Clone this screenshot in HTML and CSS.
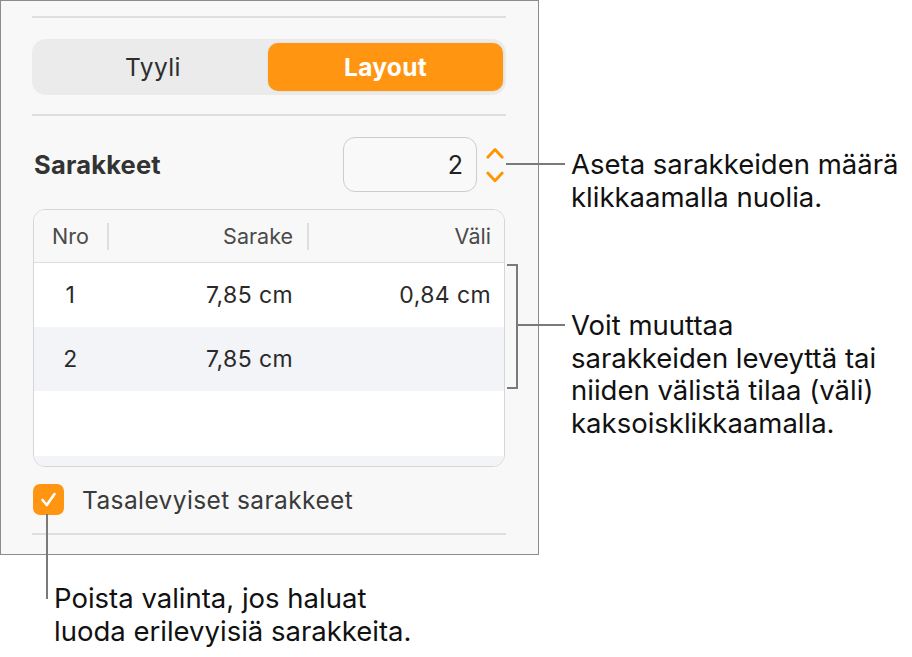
FILE: index.html
```html
<!DOCTYPE html>
<html lang="fi">
<head>
<meta charset="utf-8">
<link rel="stylesheet" href="styles.css">
</head>
<body>
<div class="stage">
  <div class="panel">
    <div class="sep sep-top"></div>
    <div class="segmented">
      <div class="seg">Tyyli</div>
      <div class="seg seg-active">Layout</div>
    </div>
    <div class="sep sep-mid"></div>
    <div class="count-row">
      <div class="count-label">Sarakkeet</div>
      <div class="count-field">2</div>
      <div class="stepper">
        <svg width="18" height="36" viewBox="0 0 18 36">
          <path d="M1.8 10.3 L9 2.5 L16.2 10.3" fill="none" stroke="#ff9500" stroke-width="2.8" stroke-linecap="round" stroke-linejoin="round"/>
          <path d="M1.8 26 L9 33.8 L16.2 26" fill="none" stroke="#ff9500" stroke-width="2.8" stroke-linecap="round" stroke-linejoin="round"/>
        </svg>
      </div>
    </div>
    <div class="table">
      <div class="trow thead">
        <div class="c c-nro">Nro</div>
        <div class="c c-sar">Sarake</div>
        <div class="c c-val">Väli</div>
      </div>
      <div class="trow tbody">
        <div class="c c-nro num">1</div>
        <div class="c c-sar">7,85 cm</div>
        <div class="c c-val">0,84 cm</div>
      </div>
      <div class="trow tbody alt">
        <div class="c c-nro num">2</div>
        <div class="c c-sar">7,85 cm</div>
        <div class="c c-val"></div>
      </div>
      <div class="tfill"></div>
      <div class="tstrip"></div>
    </div>
    <div class="check-row">
      <div class="checkbox">
        <svg width="31" height="31" viewBox="0 0 31 31">
          <path d="M9.5 16 L13.8 21 L21.5 10" fill="none" stroke="#fff" stroke-width="2.6" stroke-linecap="round" stroke-linejoin="round"/>
        </svg>
      </div>
      <div class="check-label">Tasalevyiset sarakkeet</div>
    </div>
    <div class="sep sep-bot"></div>
  </div>

  <div class="lead lead-count"></div>
  <div class="note note-count">Aseta sarakkeiden määrä<br>klikkaamalla nuolia.</div>

  <div class="bracket"></div>
  <div class="lead lead-table"></div>
  <div class="note note-table">Voit muuttaa<br>sarakkeiden leveyttä tai<br>niiden välistä tilaa (väli)<br>kaksoisklikkaamalla.</div>

  <div class="lead-v"></div>
  <div class="note note-check">Poista valinta, jos haluat<br>luoda erilevyisiä sarakkeita.</div>
</div>
</body>
</html>
```

FILE: styles.css
```css
html, body {
  margin: 0;
  padding: 0;
  background: #ffffff;
}

body {
  font-family: "Inter", "Liberation Sans", sans-serif;
  color: #000;
}

.stage {
  position: relative;
  width: 912px;
  height: 657px;
}

.panel {
  box-sizing: border-box;
  width: 539px;
  height: 555px;
  border: 1px solid #8c8c8c;
  background: #f8f8f8;
  padding: 0 32px 0 31px;
  display: flex;
  flex-direction: column;
}

.sep {
  height: 2px;
  background: #dedede;
  flex: none;
}
.sep-top { margin-top: 15px; }
.sep-mid { margin-top: 19px; }
.sep-bot { margin-top: 18px; }

.segmented {
  margin-top: 21px;
  height: 56px;
  box-sizing: border-box;
  border-radius: 14px;
  background: #ebebeb;
  padding: 4px 3px 4px 0;
  display: flex;
}

.seg {
  flex: 1;
  display: flex;
  align-items: center;
  justify-content: center;
  font-size: 24.5px;
  color: #2e2e2e;
  letter-spacing: 0.4px;
  padding-left: 6px;
}

.seg-active {
  flex: none;
  width: 235px;
  padding-left: 0;
  border-radius: 10px;
  background: #ff9510;
  color: #ffffff;
  font-weight: 700;
  letter-spacing: 0.3px;
  box-shadow: 0 0 2px rgba(0,0,0,0.12);
}

.count-row {
  margin-top: 21px;
  height: 55px;
  display: flex;
  align-items: center;
}

.count-label {
  flex: 1;
  padding-left: 2px;
  font-size: 25.5px;
  font-weight: 700;
  color: #333;
  letter-spacing: 0.2px;
}

.count-field {
  box-sizing: border-box;
  width: 134px;
  height: 55px;
  border: 1.5px solid #cccccc;
  border-radius: 12px;
  background: #f9f9f9;
  display: flex;
  align-items: center;
  justify-content: flex-end;
  padding-right: 13px;
  font-size: 25px;
  color: #222;
}

.stepper {
  width: 18px;
  margin-left: 9px;
  margin-right: 2px;
  display: flex;
  align-items: center;
}
.stepper svg { display: block; }

.table {
  margin-top: 17px;
  margin-left: 1px;
  margin-right: 1px;
  box-sizing: border-box;
  height: 258px;
  border: 1.5px solid #d6d6d6;
  border-radius: 12px;
  overflow: hidden;
  background: #ffffff;
  display: flex;
  flex-direction: column;
}

.trow {
  display: flex;
  align-items: center;
  flex: none;
}

.thead {
  height: 52px;
  background: #f8f8f8;
  border-bottom: 1.5px solid #dcdcdc;
  color: #4a4a4a;
  font-size: 21.5px;
}

.tbody {
  height: 64px;
  font-size: 23px;
  letter-spacing: 0.4px;
  color: #2a2a2a;
}

.alt { background: #f3f4f8; }

.c { box-sizing: border-box; }

.c-nro {
  width: 73px;
  padding-left: 18px;
}
.c-nro.num {
  padding-left: 0;
  text-align: center;
}

.c-sar {
  width: 200px;
  text-align: right;
  padding-right: 14px;
}
.c-val {
  flex: 1;
  text-align: right;
  padding-right: 13px;
}

.thead .c-sar,
.thead .c-val {
  height: 27px;
  line-height: 27px;
  border-left: 2px solid #dedede;
}
.thead .c-nro {
  line-height: 27px;
}

.tfill { flex: 1; }
.tstrip {
  height: 10px;
  background: #f3f4f8;
  flex: none;
}

.check-row {
  margin-top: 17px;
  height: 31px;
  display: flex;
  align-items: center;
}

.checkbox {
  width: 31px;
  height: 31px;
  margin-left: 1px;
  border-radius: 7px;
  background: #ff9510;
  flex: none;
}
.checkbox svg { display: block; }

.check-label {
  margin-left: 18px;
  font-size: 24.5px;
  color: #3a3a3a;
  letter-spacing: 0.4px;
}

/* annotations */
.lead {
  position: absolute;
  height: 2px;
  background: #7a7a7a;
}
.lead-count {
  left: 506px;
  top: 163px;
  width: 59px;
}
.lead-table {
  left: 517px;
  top: 324px;
  width: 48px;
}

.bracket {
  position: absolute;
  left: 507px;
  top: 264px;
  width: 9px;
  height: 121px;
  border: 2px solid #7a7a7a;
  border-left: none;
}

.lead-v {
  position: absolute;
  left: 46px;
  top: 514px;
  width: 2px;
  height: 85px;
  background: #7a7a7a;
}

.note {
  position: absolute;
  font-size: 27.5px;
  line-height: 32.6px;
  color: #111;
  white-space: nowrap;
}
.note-count {
  left: 571px;
  top: 148px;
}
.note-table {
  left: 571px;
  top: 309px;
}
.note-check {
  left: 54px;
  top: 582px;
}
```
